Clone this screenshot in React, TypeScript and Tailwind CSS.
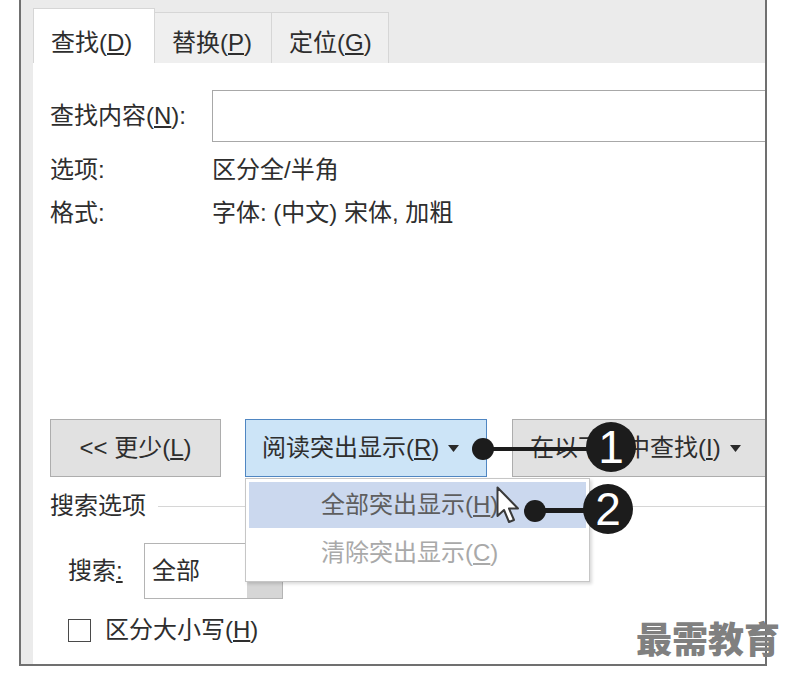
import React from 'react'

const font = { fontFamily: '"Liberation Sans", "Noto Sans CJK SC", sans-serif' }

const Caret = () => (
  <svg width="11" height="7" viewBox="0 0 11 7" className="ml-[9px] shrink-0">
    <path d="M0 0 L11 0 L5.5 7 Z" fill="#2a2a2a" />
  </svg>
)

const Tab = ({ label, acc, active }: { label: string; acc: string; active?: boolean }) => (
  <div
    className={`flex-none border border-b-0 pl-[17px] leading-[30px] ${
      active
        ? 'w-[122px] h-[55px] pt-[19px] bg-white border-[#d6d6d6]'
        : 'w-[117px] h-[51px] pt-[15px] bg-[#efefef] border-[#d6d6d6] border-l-0'
    }`}
  >
    {label}(<span className="underline">{acc}</span>)
  </div>
)

export default function App() {
  return (
    <div className="relative w-[788px] h-[682px] bg-white overflow-hidden text-[24px] text-[#2e2e2e]" style={font}>
      {/* dialog frame */}
      <div className="ml-[19px] w-[748px] h-[666px] border-x-2 border-b-2 border-[#707070] bg-[#ebebeb] pl-[12px] flex flex-col">
        <div className="h-[63px] flex items-end">
          <Tab label="查找" acc="D" active />
          <Tab label="替换" acc="P" />
          <Tab label="定位" acc="G" />
        </div>

        <div className="flex-1 bg-white pl-[17px] pt-[27px] flex flex-col overflow-hidden">
          <div className="h-[52px] flex items-center">
            <div className="w-[162px] shrink-0">
              查找内容(<span className="underline">N</span>):
            </div>
            <div className="flex-1 h-[52px] border-[1.5px] border-r-0 border-[#a8a8a8]" />
          </div>

          <div className="mt-[6px] h-[43px] flex items-center">
            <div className="w-[162px] shrink-0">选项:</div>
            <div>区分全/半角</div>
          </div>
          <div className="h-[43px] flex items-center">
            <div className="w-[162px] shrink-0">格式:</div>
            <div>字体: (中文) 宋体, 加粗</div>
          </div>

          {/* buttons */}
          <div className="mt-[185px] h-[58px] flex">
            <div className="w-[171px] shrink-0 border border-[#adadad] bg-[#e1e1e1] flex items-center justify-center">
              &lt;&lt; 更少(<span className="underline">L</span>)
            </div>
            <div className="ml-[24px] w-[242px] shrink-0 border-[1.5px] border-[#4f86c2] bg-[#cce4f7] flex items-center pl-[16px]">
              <span>
                阅读突出显示(<span className="underline">R</span>)
              </span>
              <Caret />
            </div>
            <div className="ml-[25px] w-[300px] shrink-0 border border-[#adadad] bg-[#e1e1e1] flex items-center pl-[17px]">
              <span>
                在以下项中查找(<span className="underline">I</span>)
              </span>
              <Caret />
            </div>
          </div>

          <div className="mt-[9px] h-[40px] flex items-center">
            <span>搜索选项</span>
            <div className="flex-1 ml-[12px] h-px bg-[#d6d6d6]" />
          </div>

          <div className="mt-[17px] pl-[18px] h-[56px] flex items-center">
            <div className="w-[76px] shrink-0">
              搜索<span className="underline">:</span>
            </div>
            <div className="w-[139px] h-[56px] border-[1.5px] border-[#b4b4b4] flex">
              <div className="flex-1 pl-[7px] flex items-center">全部</div>
              <div className="w-[35px] bg-[#d6d6d6]" />
            </div>
          </div>

          <div className="mt-[13px] pl-[18px] flex items-center">
            <div className="w-[23px] h-[23px] border-[1.5px] border-[#4a4a4a] bg-white" />
            <span className="ml-[14px]">
              区分大小写(<span className="underline">H</span>)
            </span>
          </div>
        </div>
      </div>

      {/* dropdown menu */}
      <div className="absolute left-[245px] top-[478px] w-[345px] h-[104px] border border-[#c6c6c6] bg-white shadow-[2px_2px_3px_rgba(0,0,0,0.15)] p-[3px] flex flex-col">
        <div className="h-[46px] bg-[#cbd8ee] pl-[72px] flex items-center text-[#5e5e5e]">
          全部突出显示(<span className="underline">H</span>)
        </div>
        <div className="flex-1 pl-[72px] flex items-center text-[#a9a9a9]">
          清除突出显示(<span className="underline">C</span>)
        </div>
      </div>

      {/* mouse pointer */}
      <svg className="absolute left-[496px] top-[486px]" width="26" height="40" viewBox="0 0 26 40">
        <path
          d="M1.5 1.5 L1.5 30 L8 24 L13 36 L18 34 L13 22.5 L22 22.5 Z"
          fill="white"
          stroke="#3a3a3a"
          strokeWidth="2"
          strokeLinejoin="round"
        />
      </svg>

      {/* callout 1 */}
      <div className="absolute left-[483px] top-[447px] w-[110px] h-[4px] bg-[#1c1c1c]" />
      <div className="absolute left-[472px] top-[438px] w-[22px] h-[22px] rounded-full bg-[#1c1c1c]" />
      <div className="absolute left-[586px] top-[422px] w-[50px] h-[50px] rounded-full bg-[#1c1c1c] flex items-center justify-center text-white text-[46px] leading-none">
        1
      </div>

      {/* callout 2 */}
      <div className="absolute left-[535px] top-[508px] w-[55px] h-[5px] bg-[#1c1c1c]" />
      <div className="absolute left-[524px] top-[500px] w-[22px] h-[22px] rounded-full bg-[#1c1c1c]" />
      <div className="absolute left-[583px] top-[484px] w-[50px] h-[50px] rounded-full bg-[#1c1c1c] flex items-center justify-center text-white text-[46px] leading-none">
        2
      </div>

      {/* watermark */}
      <div className="absolute left-[636px] top-[619px] text-[36px] font-black leading-[44px] text-[#808080]">
        最需教育
      </div>
    </div>
  )
}
